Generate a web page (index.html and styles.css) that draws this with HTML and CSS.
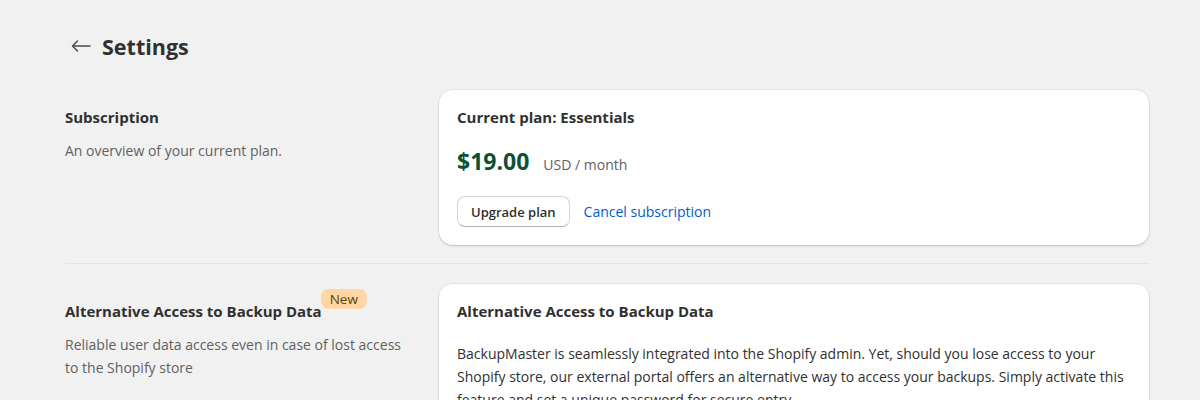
FILE: index.html
```html
<!DOCTYPE html>
<html lang="en">
<head>
    <meta charset="UTF-8">
    <title>Settings</title>
    <link rel="stylesheet" href="styles.css">
</head>
<body>
    <div class="page">
        <div class="header">
            <button class="backBtn">
                <svg width="20" height="20" viewBox="0 0 20 20"><path d="M19 10H1.5M6.5 5l-5 5 5 5" fill="none" stroke="#4a4a4a" stroke-width="1.5" stroke-linecap="round" stroke-linejoin="round"/></svg>
            </button>
            <h1 class="title">Settings</h1>
        </div>

        <div class="section">
            <div class="sideInfo">
                <h2 class="sideTitle">Subscription</h2>
                <p class="sideText">An overview of your current plan.</p>
            </div>
            <div class="card">
                <h3 class="cardTitle">Current plan: Essentials</h3>
                <div class="priceRow">
                    <span class="price">$19.00</span>
                    <span class="period">USD / month</span>
                </div>
                <div class="actions">
                    <button class="btn">Upgrade plan</button>
                    <a class="link" href="#">Cancel subscription</a>
                </div>
            </div>
        </div>

        <div class="divider"></div>

        <div class="section second">
            <div class="sideInfo">
                <h2 class="sideTitle"><span class="withBadge">Alternative Access to Backup Data<span class="badge">New</span></span></h2>
                <p class="sideText">Reliable user data access even in case of lost access to the Shopify store</p>
            </div>
            <div class="card">
                <h3 class="cardTitle">Alternative Access to Backup Data</h3>
                <p class="cardText">BackupMaster is seamlessly integrated into the Shopify admin. Yet, should you lose access to your Shopify store, our external portal offers an alternative way to access your backups. Simply activate this feature and set a unique password for secure entry.</p>
            </div>
        </div>
    </div>
</body>
</html>
```

FILE: styles.css
```css
body{
    margin: 0;
    background-color: #f1f1f1;
    font-family: "Open Sans", "Noto Sans", sans-serif;
    font-size: 14px;
    line-height: 23px;
    color: #303030;
}
.page{
    width: 1084px;
    padding: 30px 0 0 65px;
}
.header{
    display: flex;
    align-items: center;
    gap: 7px;
    height: 32px;
}
.backBtn{
    border: 0;
    background: none;
    padding: 0 0 0 6px;
    width: 30px;
    height: 28px;
    display: flex;
    align-items: center;
}
.title{
    margin: 0;
    font-size: 21.5px;
    font-weight: 700;
}
.section{
    display: grid;
    grid-template-columns: 374px 1fr;
    margin-top: 28px;
}
.second{
    margin-top: 20px;
}
.sideInfo{
    padding-top: 16px;
}
.sideTitle{
    margin: 0;
    font-size: 15px;
    font-weight: 700;
}
.sideText{
    margin: 10px 0 0;
    color: #616161;
    width: 350px;
}
.withBadge{
    position: relative;
}
.badge{
    position: absolute;
    left: calc(100% - 1px);
    top: -12px;
    background-color: #ffd6a4;
    color: #5e4200;
    font-weight: 400;
    font-size: 13.5px;
    line-height: 20px;
    padding: 0 9px;
    border-radius: 8px;
}
.card{
    background-color: #fff;
    border-radius: 14px;
    box-shadow: 0 1px 0 rgba(0,0,0,.08), 0 0 0 1px rgba(0,0,0,.06), 0 2px 3px rgba(0,0,0,.06);
    padding: 16px 18px 18px;
}
.cardTitle{
    margin: 0;
    font-size: 15px;
    font-weight: 700;
}
.priceRow{
    display: flex;
    align-items: baseline;
    gap: 14px;
    margin-top: 21px;
}
.price{
    font-size: 23px;
    font-weight: 700;
    color: #0c5132;
}
.period{
    color: #616161;
}
.actions{
    display: flex;
    align-items: center;
    gap: 14px;
    margin-top: 20px;
}
.btn{
    font-family: inherit;
    font-size: 13px;
    font-weight: 600;
    color: #303030;
    background-color: #fff;
    border: 1px solid #d4d4d4;
    border-bottom-color: #b5b5b5;
    border-radius: 8px;
    height: 31px;
    padding: 0 13px;
}
.link{
    color: #005bd3;
    text-decoration: none;
}
.divider{
    height: 1px;
    background-color: #e3e3e3;
    margin-top: 18px;
}
.cardText{
    margin: 19px 0 0;
}
```
